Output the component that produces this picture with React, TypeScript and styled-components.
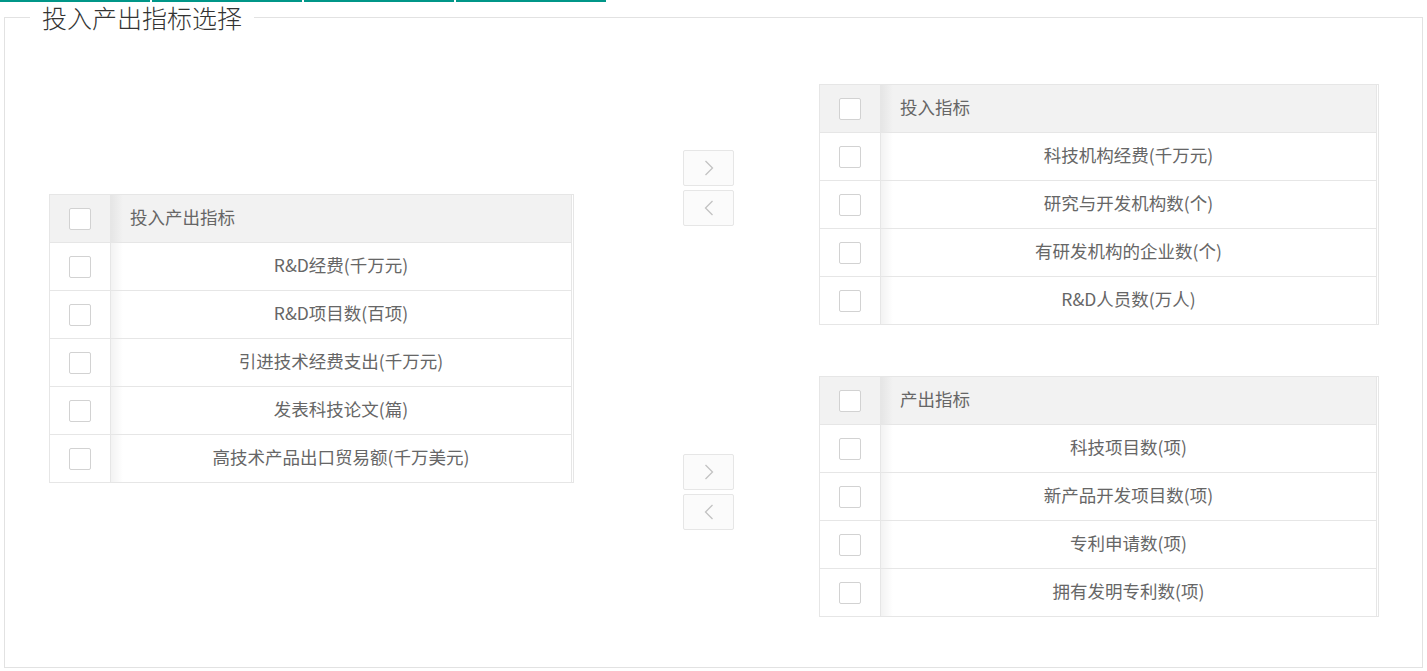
import styled, { createGlobalStyle } from 'styled-components';

const GlobalStyle = createGlobalStyle`
  html, body {
    margin: 0;
    padding: 0;
    background: #fff;
  }
  body {
    font-family: "Noto Sans CJK SC", "Liberation Sans", sans-serif;
    color: #666;
  }
`;

const leftItems = [
  'R&D经费(千万元)',
  'R&D项目数(百项)',
  '引进技术经费支出(千万元)',
  '发表科技论文(篇)',
  '高技术产品出口贸易额(千万美元)',
];

const inputItems = [
  '科技机构经费(千万元)',
  '研究与开发机构数(个)',
  '有研发机构的企业数(个)',
  'R&D人员数(万人)',
];

const outputItems = [
  '科技项目数(项)',
  '新产品开发项目数(项)',
  '专利申请数(项)',
  '拥有发明专利数(项)',
];

const Chevron = ({ dir }: { dir: 'right' | 'left' }) => (
  <svg width="10" height="16" viewBox="0 0 10 16" fill="none">
    <polyline
      points={dir === 'right' ? '1.5,1 8.5,8 1.5,15' : '8.5,1 1.5,8 8.5,15'}
      stroke="#c2c2c2"
      strokeWidth="1.3"
    />
  </svg>
);

type TableProps = { title: string; items: string[]; width: number };

const IndicatorTable = ({ title, items, width }: TableProps) => (
  <TableView width={width}>
    <TableGrid>
      <Row header>
        <CheckCell>
          <Checkbox />
        </CheckCell>
        <TextCell header>{title}</TextCell>
      </Row>
      {items.map(item => (
        <Row key={item}>
          <CheckCell>
            <Checkbox />
          </CheckCell>
          <TextCell>{item}</TextCell>
        </Row>
      ))}
    </TableGrid>
  </TableView>
);

const MoveButtons = ({ offset }: { offset: number }) => (
  <ButtonGroup offset={offset}>
    <MoveButton>
      <Chevron dir="right" />
    </MoveButton>
    <MoveButton>
      <Chevron dir="left" />
    </MoveButton>
  </ButtonGroup>
);

export default function App() {
  return (
    <>
      <GlobalStyle />
      <TabBar>
        <TabLine />
        <TabLine />
        <TabLine />
        <TabLine />
      </TabBar>
      <Field>
        <Legend>投入产出指标选择</Legend>
        <Body>
          <LeftColumn>
            <IndicatorTable title="投入产出指标" items={leftItems} width={525} />
          </LeftColumn>
          <MiddleColumn>
            <MoveButtons offset={118} />
            <MoveButtons offset={228} />
          </MiddleColumn>
          <RightColumn>
            <IndicatorTable title="投入指标" items={inputItems} width={560} />
            <IndicatorTable title="产出指标" items={outputItems} width={560} />
          </RightColumn>
        </Body>
      </Field>
    </>
  );
}

const TabBar = styled.div`
  display: flex;
  gap: 2px;
  height: 2px;
`;

const TabLine = styled.div`
  width: 150px;
  height: 2px;
  background: #009688;
`;

const Field = styled.fieldset`
  margin: 0 4px;
  padding: 0;
  border: 1px solid #e2e2e2;
  min-width: 0;
`;

const Legend = styled.legend`
  margin-left: 25px;
  padding: 0 12px;
  font-size: 25px;
  line-height: 30px;
  font-weight: 300;
  color: #333;
`;

const Body = styled.div`
  display: flex;
  align-items: flex-start;
  padding: 0 44px 50px 44px;
`;

const LeftColumn = styled.div`
  margin-top: 162px;
`;

const MiddleColumn = styled.div`
  display: flex;
  flex-direction: column;
  margin-left: 109px;
  margin-right: 85px;
`;

const RightColumn = styled.div`
  display: flex;
  flex-direction: column;
  gap: 51px;
  margin-top: 52px;
`;

const ButtonGroup = styled.div<{ offset: number }>`
  display: flex;
  flex-direction: column;
  gap: 4px;
  margin-top: ${p => p.offset}px;
`;

const MoveButton = styled.button`
  width: 51px;
  height: 36px;
  padding: 0;
  display: flex;
  align-items: center;
  justify-content: center;
  background: #fbfbfb;
  border: 1px solid #e6e6e6;
  border-radius: 2px;
  cursor: not-allowed;
`;

const TableView = styled.div<{ width: number }>`
  width: ${p => p.width}px;
  box-sizing: border-box;
  border: 1px solid #e6e6e6;
  background: #fff;
`;

const TableGrid = styled.div`
  margin-right: 1px;
  border-right: 1px solid #e6e6e6;
`;

const Row = styled.div<{ header?: boolean }>`
  display: grid;
  grid-template-columns: 61px 1fr;
  height: 47px;
  background: ${p => (p.header ? '#f2f2f2' : '#fff')};

  & + & {
    border-top: 1px solid #e6e6e6;
  }
`;

const CheckCell = styled.div`
  display: flex;
  align-items: center;
  justify-content: center;
  border-right: 1px solid #e6e6e6;
`;

const Checkbox = styled.span`
  display: block;
  width: 22px;
  height: 22px;
  box-sizing: border-box;
  border: 1px solid #d2d2d2;
  border-radius: 2px;
  background: #fff;
`;

const TextCell = styled.div<{ header?: boolean }>`
  display: flex;
  align-items: center;
  justify-content: ${p => (p.header ? 'flex-start' : 'center')};
  padding: 0 19px 3px 19px;
  font-size: 17.5px;
  line-height: 24px;
  color: #666;
  white-space: nowrap;
  background-image: linear-gradient(to right, rgba(0, 0, 0, 0.05), rgba(0, 0, 0, 0) 12px);
`;
